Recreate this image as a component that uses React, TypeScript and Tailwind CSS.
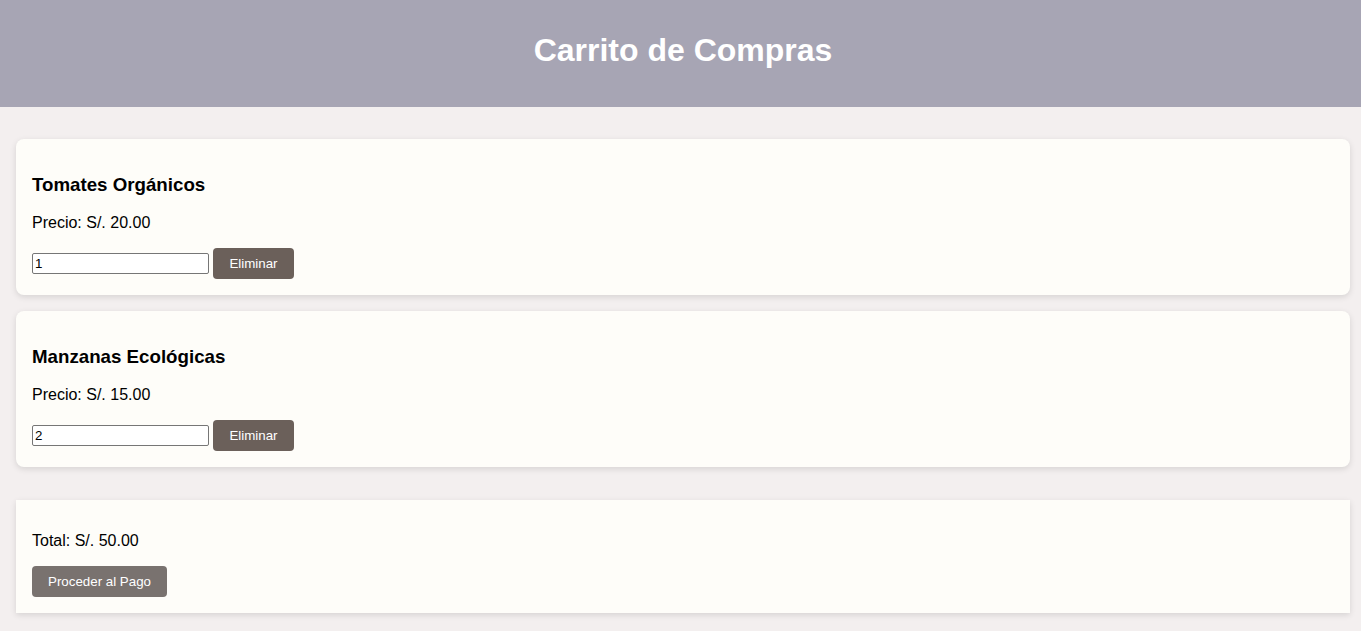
import React from 'react';

interface CartItem {
  id: number;
  name: string;
  price: number;
  qty: number;
}

const items: CartItem[] = [
  { id: 1, name: 'Tomates Orgánicos', price: 20, qty: 1 },
  { id: 2, name: 'Manzanas Ecológicas', price: 15, qty: 2 },
];

const CartCard: React.FC<{ item: CartItem }> = ({ item }) => {
  return (
    <div className="bg-[#fefdf9] rounded-lg shadow-[0_2px_6px_rgba(0,0,0,0.12)] px-4 pt-[35px] pb-4 flex flex-col">
      <h3 className="text-[18.72px] leading-[22px] font-bold text-black">{item.name}</h3>
      <p className="mt-[18px] text-base leading-[18px] text-black">Precio: S/. {item.price.toFixed(2)}</p>
      <div className="mt-[16px] flex items-center gap-1">
        <input
          type="number"
          defaultValue={item.qty}
          className="w-[177px] h-[21px] border border-[#767676] rounded-[2px] px-[2px] text-[13.33px] text-black bg-white outline-none [appearance:textfield] [&::-webkit-inner-spin-button]:appearance-none"
        />
        <button className="w-[81px] h-[31px] bg-[#6b605a] text-white text-[13.33px] rounded-[4px]">
          Eliminar
        </button>
      </div>
    </div>
  );
};

export default function App() {
  const total = items.reduce((sum, i) => sum + i.price * i.qty, 0);
  return (
    <div className="min-h-screen bg-[#f3efef] font-['Liberation_Sans',Arial,sans-serif]">
      <header className="bg-[#a7a5b4] pt-[32px] pb-[38px] pl-[5px] text-center">
        <h1 className="text-[32px] leading-[37px] font-bold text-white">Carrito de Compras</h1>
      </header>
      <main className="pl-4 pr-[11px] pt-8 pb-4">
        <div className="flex flex-col gap-4">
          {items.map((item) => (
            <CartCard key={item.id} item={item} />
          ))}
        </div>
        <div className="mt-[33px] bg-[#fefdf9] shadow-[0_2px_6px_rgba(0,0,0,0.12)] px-4 pt-[32px] pb-4 flex flex-col items-start">
          <p className="text-base leading-[18px] text-black">Total: S/. {total.toFixed(2)}</p>
          <button className="mt-[16px] w-[135px] h-[31px] bg-[#79726f] text-white text-[13.33px] rounded-[4px]">
            Proceder al Pago
          </button>
        </div>
      </main>
    </div>
  );
}
